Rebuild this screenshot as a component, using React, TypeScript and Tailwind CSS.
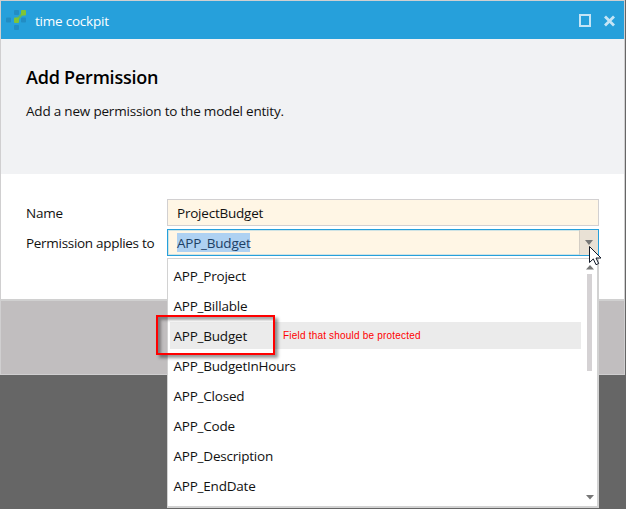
const options = [
  { label: 'APP_Project' },
  { label: 'APP_Billable' },
  { label: 'APP_Budget', note: 'Field that should be protected' },
  { label: 'APP_BudgetInHours' },
  { label: 'APP_Closed' },
  { label: 'APP_Code' },
  { label: 'APP_Description' },
  { label: 'APP_EndDate' },
];

function Logo() {
  return (
    <svg width="20" height="20" viewBox="0 0 20 20">
      <g fill="#228dc4">
        <rect x="8" y="0" width="5" height="5" rx="1" />
        <rect x="0" y="7.5" width="5" height="5" rx="1" />
        <rect x="15" y="7.5" width="5" height="5" rx="1" />
        <rect x="8" y="15" width="5" height="5" rx="1" />
      </g>
      <path d="M11 8 L15 3.5 L17 5 L12.5 10Z" fill="#5fb860" />
      <rect x="15" y="0" width="5" height="5.5" rx="1" fill="#7fc436" />
      <rect x="8" y="7.5" width="5" height="5.5" rx="1" fill="#7fc436" />
    </svg>
  );
}

export default function App() {
  return (
    <div className="relative h-[509px] w-[626px] overflow-hidden whitespace-nowrap bg-[#666666] font-['Open_Sans','Noto_Sans',sans-serif] text-[13.5px] leading-[22px] tracking-[-0.22px] text-[#111111]">
      <div className="flex h-[375px] w-[625px] flex-col border border-[#d0cfd0] bg-white">
        <header className="flex h-[38px] shrink-0 items-center bg-[#26a0db] pl-[5px] pr-[9px] text-white">
          <Logo />
          <span className="ml-[9px] pt-px">time cockpit</span>
          <svg width="37" height="14" viewBox="0 0 37 14" className="ml-auto" fill="none" stroke="#c5e5f6">
            <path d="M2 2H12V13H2Z" strokeWidth="2" />
            <path d="M27 3.5L36 12.5M36 3.5L27 12.5" strokeWidth="2.8" />
          </svg>
        </header>
        <section className="h-[135px] shrink-0 bg-[#f1f2f4] pl-[25px] pt-[27px]">
          <h1 className="text-[18px] font-semibold tracking-[-0.22px] text-black">Add Permission</h1>
          <p className="mt-[12px] tracking-[-0.2px]">Add a new permission to the model entity.</p>
        </section>
        <main className="h-[125px] shrink-0 pl-[25px] pt-[25px]">
          <div className="flex h-[27px] items-center">
            <div className="w-[141px]">Name</div>
            <div className="flex h-[27px] w-[432px] items-center border border-[#d2d0d1] bg-[#fff6e5] pl-[9px]">
              ProjectBudget
            </div>
          </div>
          <div className="mt-[3px] flex h-[27px] items-center">
            <div className="w-[141px] tracking-[-0.3px]">Permission applies to</div>
            <div className="flex h-[27px] w-[432px] items-center border border-[#26a0db] bg-[#fff6e5] pl-[9px] shadow-[inset_0_0_0_1px_#cfe3e4]">
              <span className="h-[19px] bg-[#aed1f2] leading-[20px] text-[#1d4065]">APP_Budget</span>
              <div className="ml-auto flex h-[25px] w-[19px] justify-center border-l border-[#d3cdc4] bg-[#e9e1d5] pt-[10px]">
                <svg width="8" height="5"><path d="M0 0H8L4 5Z" fill="#777" /></svg>
              </div>
            </div>
          </div>
        </main>
        <footer className="flex-1 border-t-2 border-[#d0d0d0] bg-[#c1bebf]" />
      </div>

      <div className="absolute left-[167px] top-[258px] flex h-[250px] w-[432px] border border-b-2 border-r-2 border-[#d2d2d2] bg-white">
        <div className="flex w-[413px] shrink-0 flex-col gap-[3px] pl-[2px] pt-[3px]">
          {options.map(({ label, note }) => (
            <div key={label} className={`flex h-[27px] shrink-0 items-center pl-[3.5px] ${note ? 'bg-[#ebebeb]' : ''}`}>
              <span className={note ? 'w-[109.5px]' : ''}>{label}</span>
              {note && (
                <span className="font-['Liberation_Sans',Arial,sans-serif] text-[10px] tracking-[0.2px] text-[#ff0000]">{note}</span>
              )}
            </div>
          ))}
        </div>
        <div className="ml-[4px] flex w-[9px] flex-col items-center pt-[6px]">
          <svg width="8" height="5"><path d="M0 4.5H8L4 0Z" fill="#777" /></svg>
          <div className="mt-[4px] h-[97px] w-[5px] bg-[#d5d2d4]" />
          <svg width="8" height="5" className="mb-[6px] mt-auto"><path d="M0 0H8L4 4.5Z" fill="#777" /></svg>
        </div>
      </div>

      <div className="absolute left-[156px] top-[315px] h-[40px] w-[119px] border-2 border-[#ff0000] shadow-[3px_3px_3px_rgba(0,0,0,0.4),inset_3px_3px_3px_rgba(0,0,0,0.35)]" />

      <svg className="absolute left-[589px] top-[246px]" width="13" height="21" viewBox="0 0 13 21">
        <path d="M.5 .5V16.5L4.3 12.9L7 18.7L9.7 17.5L7 12H12Z" fill="white" stroke="#111827" />
      </svg>
    </div>
  );
}
